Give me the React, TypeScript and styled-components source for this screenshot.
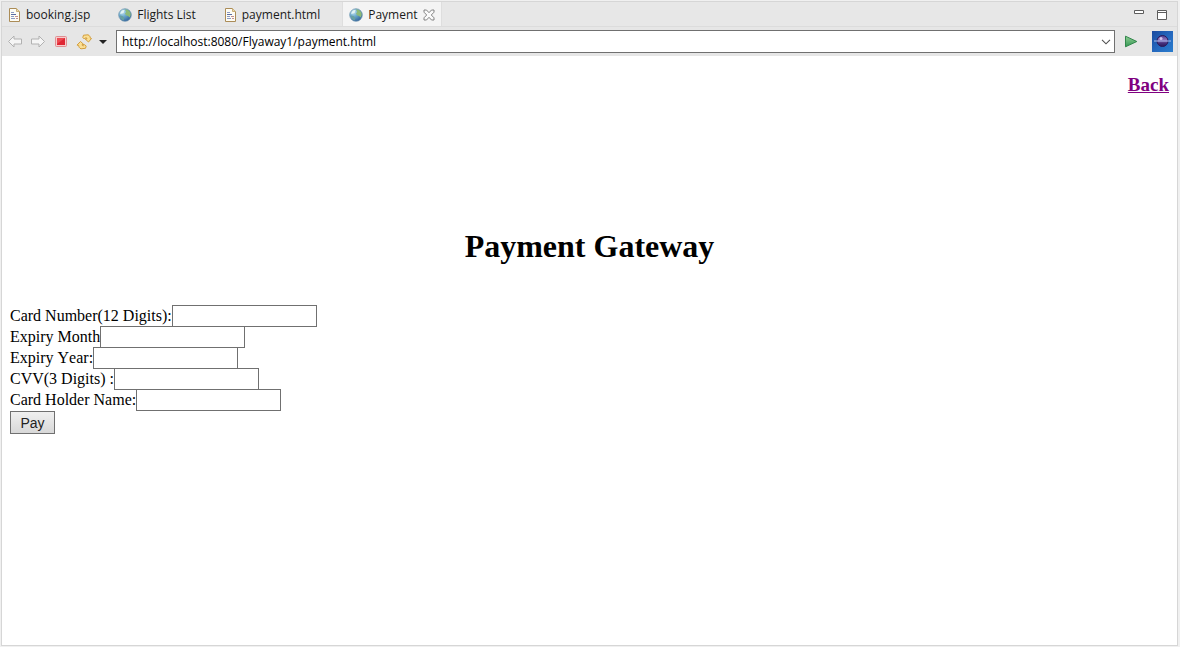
import React from "react";
import styled, { createGlobalStyle, css } from "styled-components";

const GlobalStyle = createGlobalStyle`
  *, *::before, *::after { box-sizing: border-box; }
  html, body, #root { height: 100%; }
  body { margin: 0; background: #f0f0f0; }
  svg { display: block; flex: none; }
`;

const Window = styled.div`
  display: flex;
  flex-direction: column;
  min-height: 100%;
  padding: 1px 2px 1px 1px;
  font-family: "Open Sans", "Noto Sans", sans-serif;
  font-size: 12px;
  color: #1a1a1a;
`;

const Frame = styled.div`
  display: flex;
  flex: 1;
  flex-direction: column;
  border: 1px solid #d6d6d6;
  background: #fff;
`;

const TabBar = styled.div`
  display: flex;
  align-items: stretch;
  height: 25px;
  background: #e7e7e7;
  border-bottom: 1px solid #dcdcdc;
`;

const Tab = styled.button<{ $active?: boolean }>`
  display: flex;
  align-items: center;
  gap: 5px;
  padding: 2px 22px 0 6px;
  border: 0;
  background: none;
  color: inherit;
  font: inherit;
  line-height: 16px;
  white-space: nowrap;
  ${(p) =>
    p.$active &&
    css`
      padding-right: 6px;
      border: 1px solid #dedede;
      border-width: 0 1px;
      background: #f4f4f4;
    `}
`;

const ViewButtons = styled.div`
  display: flex;
  align-items: flex-start;
  gap: 12px;
  margin-left: auto;
  padding: 7px 9px 0 0;
`;

const IconButton = styled.button`
  display: flex;
  padding: 0;
  border: 0;
  background: none;
`;

const Toolbar = styled.div`
  display: flex;
  align-items: center;
  height: 29px;
  padding: 0 4px 0 5px;
  background: #e6e6e6;
`;

const ToolGroup = styled.div`
  display: flex;
  align-items: center;
  gap: 7px;
  margin-right: 9px;
`;

const RefreshGroup = styled.div`
  display: flex;
  align-items: center;
  gap: 7px;
`;

const AddressBox = styled.div`
  display: flex;
  flex: 1;
  align-items: center;
  height: 23px;
  padding-right: 3px;
  border: 1px solid #707070;
  background: #fff;
`;

const AddressInput = styled.input`
  flex: 1;
  min-width: 0;
  padding: 0 5px;
  border: 0;
  outline: 0;
  background: none;
  color: #000;
  font: inherit;
`;

const ActionGroup = styled.div`
  display: flex;
  align-items: center;
  gap: 14px;
  margin-left: 9px;
`;

const Page = styled.main`
  flex: 1;
  padding: 18px 8px;
  color: #000;
  font-family: "Liberation Serif", "Times New Roman", serif;
  font-size: 16px;
  font-kerning: none;
`;

const BackRow = styled.div`
  text-align: right;
  font-size: 19px;
  font-weight: bold;
  line-height: 22px;
`;

const BackLink = styled.a`
  color: #800080;
  text-decoration: underline;
`;

const Title = styled.h1`
  margin: 131px 0 40px;
  text-align: center;
  font-size: 32px;
  line-height: 38px;
`;

const Field = styled.div`
  display: flex;
  height: 21px;
  line-height: 22px;
`;

const FieldInput = styled.input`
  width: 145px;
  height: 22px;
  padding: 2px;
  border: 1px solid #707070;
  background: #fff;
`;

const PayButton = styled.button`
  margin-top: 1px;
  width: 45px;
  height: 23px;
  padding: 0;
  border: 1px solid #707070;
  background: linear-gradient(#f0f0f0, #d8d8d8);
  color: #222;
  font-family: "Liberation Sans", Arial, sans-serif;
  font-size: 14px;
`;

const FileIcon = () => (
  <svg width="13" height="16" viewBox="0 0 13 16">
    <path d="M1.500 1.500h7l3 3v10h-10z" fill="#fdfcf5" stroke="#ab8c57" />
    <path d="M8.500 1.500v3h3" fill="#ecd9ac" stroke="#c9ae78" />
    <path d="M3 5.500h3M3 9.500h3M3 11.500h4" stroke="#8b9ac4" />
    <path d="M3 7.500h5" stroke="#5a6ca4" />
    <path d="M7 9.500h3M8 11.500h2" stroke="#c48f8f" />
  </svg>
);

const GlobeIcon = () => (
  <svg width="14" height="14" viewBox="0 0 14 14">
    <defs>
      <radialGradient id="ocean" cx=".3" cy=".25" r=".85">
        <stop offset="0" stopColor="#c9e8f4" />
        <stop offset=".45" stopColor="#6aa8cc" />
        <stop offset="1" stopColor="#2c5c98" />
      </radialGradient>
    </defs>
    <circle cx="7" cy="7" r="6.300" fill="url(#ocean)" stroke="#6d93ae" strokeWidth=".7" />
    <path d="M7 1.500c2-.5 4.500.6 5.500 3.500.5 2-.2 3.500-1.200 4.500l-1-1.500-2-.5-1.300-2 1.200-1.500z" fill="#8dba78" />
    <path d="M2 7.500l2.500.5 2 2-1 2.500c-2-.7-3.500-2.500-3.500-5z" fill="#68a0a0" />
    <path d="M2.200 6C2.500 3.500 4.500 1.800 6.500 2L5.500 5z" fill="#e4f3f4" />
  </svg>
);

const CloseIcon = () => (
  <svg width="12" height="12" viewBox="0 0 12 12">
    <path
      d="M1 1h2.500L6 3.700 8.500 1H11v2.200L8.300 6 11 8.800V11H8.500L6 8.300 3.500 11H1V8.800L3.700 6 1 3.200z"
      fill="#fafafa"
      stroke="#777"
      strokeWidth=".9"
    />
  </svg>
);

const MinimizeIcon = () => (
  <svg width="11" height="5" viewBox="0 0 11 5">
    <path d="M.5 1.500h9v3h-9z" fill="#fff" stroke="#5d5d5d" />
  </svg>
);

const MaximizeIcon = () => (
  <svg width="11" height="12" viewBox="0 0 11 12">
    <path d="M.5 1.500h9v9h-9zM.5 3.500h9" fill="#fff" stroke="#5d5d5d" />
  </svg>
);

const ArrowIcon = ({ flip }: { flip?: boolean }) => (
  <svg width="16" height="14" viewBox="0 0 16 14">
    <path
      d="M1.500 6.500L7 1v3h7.500v5H7v3z"
      transform={flip ? "matrix(-1 0 0 1 16 0)" : undefined}
      fill="#f5f5f5"
      stroke="#b1b1b1"
      strokeLinejoin="round"
    />
  </svg>
);

const StopIcon = () => (
  <svg width="16" height="16" viewBox="0 0 16 16">
    <rect x="2.500" y="2.500" width="11" height="10" rx="1" fill="#f6cccc" stroke="#df8f92" />
    <rect x="4" y="4" width="8" height="7" fill="#df2633" />
    <path d="M4 4h8L4 10z" fill="#ec4b52" />
  </svg>
);

const RefreshIcon = () => (
  <svg width="16" height="16" viewBox="0 0 16 16">
    <g fill="#fbdf94" stroke="#cf962f" strokeWidth=".9" strokeLinejoin="round">
      <path d="M7.500 1.200L12 .8c1.500.6 2.300 1.800 2.300 3.400l1.200.3-3 3.500-3.300-3 1.800-.2c0-.8-.6-1.200-1.400-1.100L8.300 5 6.800 3.500z" />
      <path d="M9.500 14.300l-4.500.5c-1.500-.6-2.300-1.800-2.300-3.400L1 11.100l3.500-3.600 3.300 3-1.800.2c0 .8.6 1.200 1.400 1.100l1.300-1.200 1.500 1.500z" />
    </g>
  </svg>
);

const CaretIcon = () => (
  <svg width="8" height="4" viewBox="0 0 8 4">
    <path d="M0 0h8L4 4z" fill="#222" />
  </svg>
);

const ChevronIcon = () => (
  <svg width="10" height="6" viewBox="0 0 10 6">
    <path d="M1 .8l4 4 4-4" fill="none" stroke="#505050" strokeWidth="1.100" />
  </svg>
);

const GoIcon = () => (
  <svg width="14" height="13" viewBox="0 0 14 13">
    <defs>
      <linearGradient id="go" x2="0" y2="1">
        <stop offset="0" stopColor="#91cf94" />
        <stop offset="1" stopColor="#329653" />
      </linearGradient>
    </defs>
    <path d="M1.500 1.200L12.800 6.500 1.500 11.800z" fill="url(#go)" stroke="#31864b" strokeLinejoin="round" />
  </svg>
);

const EclipseIcon = () => (
  <svg width="21" height="21" viewBox="0 0 21 21">
    <defs>
      <linearGradient id="sky" x2="1" y2="1">
        <stop offset="0" stopColor="#1a4a9e" />
        <stop offset=".5" stopColor="#2467bd" />
        <stop offset="1" stopColor="#2a7dce" />
      </linearGradient>
      <linearGradient id="moon" x2="0" y2="1">
        <stop offset="0" stopColor="#4d3c8c" />
        <stop offset=".4" stopColor="#8d74bb" />
        <stop offset=".7" stopColor="#46307c" />
        <stop offset="1" stopColor="#2b1b5c" />
      </linearGradient>
    </defs>
    <path d="M0 0h21v21H0z" fill="url(#sky)" />
    <circle cx="10.500" cy="10" r="5.500" fill="url(#moon)" stroke="#2b1b5c" />
    <circle cx="9" cy="7.500" r="1.500" fill="#d3c4ee" />
    <path d="M2 10h17" stroke="#a9bdf0" />
  </svg>
);

const tabs = [
  { label: "booking.jsp", icon: <FileIcon /> },
  { label: "Flights List", icon: <GlobeIcon /> },
  { label: "payment.html", icon: <FileIcon /> },
  { label: "Payment", icon: <GlobeIcon />, active: true },
];

const fields = [
  { id: "card-number", label: "Card Number(12 Digits):" },
  { id: "expiry-month", label: "Expiry Month" },
  { id: "expiry-year", label: "Expiry Year:" },
  { id: "cvv", label: "CVV(3 Digits) :" },
  { id: "holder", label: "Card Holder Name:" },
];

export default function App() {
  return (
    <Window>
      <GlobalStyle />
      <Frame>
        <TabBar>
          {tabs.map((tab) => (
            <Tab key={tab.label} type="button" $active={tab.active}>
              {tab.icon}
              {tab.label}
              {tab.active && <CloseIcon />}
            </Tab>
          ))}
          <ViewButtons>
            <IconButton type="button" aria-label="Minimize"><MinimizeIcon /></IconButton>
            <IconButton type="button" aria-label="Maximize"><MaximizeIcon /></IconButton>
          </ViewButtons>
        </TabBar>
        <Toolbar>
          <ToolGroup>
            <IconButton type="button" aria-label="Back"><ArrowIcon /></IconButton>
            <IconButton type="button" aria-label="Forward"><ArrowIcon flip /></IconButton>
            <IconButton type="button" aria-label="Stop"><StopIcon /></IconButton>
            <RefreshGroup>
              <IconButton type="button" aria-label="Refresh"><RefreshIcon /></IconButton>
              <IconButton type="button" aria-label="Refresh options"><CaretIcon /></IconButton>
            </RefreshGroup>
          </ToolGroup>
          <AddressBox>
            <AddressInput aria-label="Address" defaultValue="http://localhost:8080/Flyaway1/payment.html" />
            <IconButton type="button" aria-label="Show history"><ChevronIcon /></IconButton>
          </AddressBox>
          <ActionGroup>
            <IconButton type="button" aria-label="Go"><GoIcon /></IconButton>
            <IconButton type="button" aria-label="Open in browser"><EclipseIcon /></IconButton>
          </ActionGroup>
        </Toolbar>
        <Page>
          <BackRow>
            <BackLink href="#">Back</BackLink>
          </BackRow>
          <Title>Payment Gateway</Title>
          <form onSubmit={(event) => event.preventDefault()}>
            {fields.map((field) => (
              <Field key={field.id}>
                <label htmlFor={field.id}>{field.label}</label>
                <FieldInput id={field.id} type="text" />
              </Field>
            ))}
            <PayButton type="submit">Pay</PayButton>
          </form>
        </Page>
      </Frame>
    </Window>
  );
}
